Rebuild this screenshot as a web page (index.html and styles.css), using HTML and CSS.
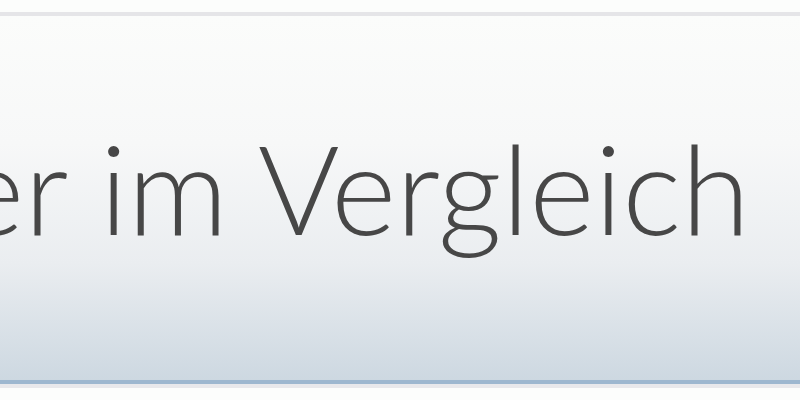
FILE: index.html
```html
<!DOCTYPE html>
<html lang="de">
<head>
<meta charset="utf-8">
<link rel="stylesheet" href="styles.css">
</head>
<body>
<div class="banner">
  <div class="panel">
    <h1 class="title">er im Vergleich</h1>
  </div>
</div>
</body>
</html>
```
FILE: styles.css
```css
html, body {
  margin: 0;
  padding: 0;
  background: #fcfdfc;
  width: 800px;
  height: 400px;
  overflow: hidden;
}
.banner {
  padding-top: 12px;
}
.panel {
  height: 372px;
  box-sizing: border-box;
  border-top: 4px solid #e5e5e8;
  border-bottom: 4px solid #9db7cf;
  box-shadow: 0 4px 0 #e8e8eb;
  background: linear-gradient(to bottom, #fbfcfb 0%, #f7f8f8 35%, #eaedf0 68%, #cdd8e1 100%);
  padding-top: 109px;
  overflow: hidden;
}
.title {
  margin: 0 0 0 -41px;
  font-family: "Lato", "Noto Sans", sans-serif;
  font-weight: 300;
  font-size: 125px;
  line-height: 125px;
  color: #474747;
  white-space: nowrap;
  letter-spacing: 0;
}
```
